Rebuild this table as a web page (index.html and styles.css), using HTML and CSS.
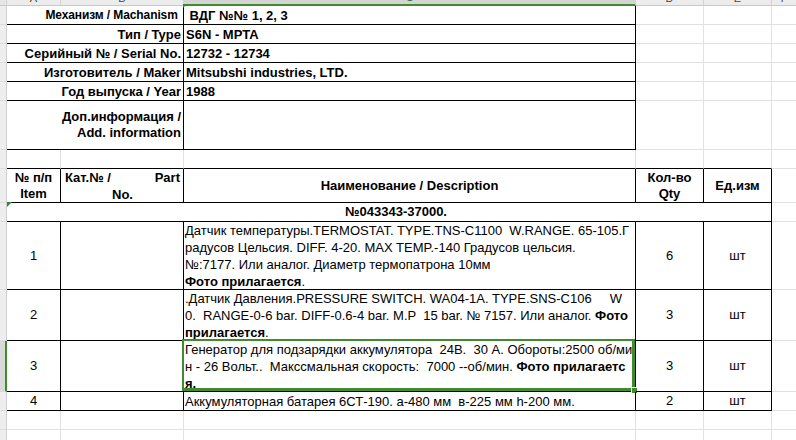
FILE: index.html
```html
<!DOCTYPE html>
<html lang="ru">
<head>
<meta charset="utf-8">
<title>Sheet</title>
<link rel="stylesheet" href="styles.css">
</head>
<body>
<div class="sheet">
  <!-- column header strip -->
  <div class="ch corner"></div>
  <div class="ch"><span>A</span></div>
  <div class="ch"><span>B</span></div>
  <div class="ch ch-sel"><span>C</span></div>
  <div class="ch"><span>D</span></div>
  <div class="ch"><span>E</span></div>
  <div class="ch ch-last"><span>F</span></div>

  <!-- header block -->
  <div class="rh"></div>
  <div class="c lbl span2 k"><span class="lbl-narrow">Механизм / Machanism&nbsp;</span></div>
  <div class="c val k flag"> ВДГ №№ 1, 2, 3</div>
  <div class="c"></div><div class="c"></div><div class="c last"></div>

  <div class="rh"></div>
  <div class="c lbl span2 k">Тип / Type</div>
  <div class="c val k">S6N - MPTA</div>
  <div class="c"></div><div class="c"></div><div class="c last"></div>

  <div class="rh"></div>
  <div class="c lbl span2 k">Серийный № / Serial No.</div>
  <div class="c val k">12732 - 12734</div>
  <div class="c"></div><div class="c"></div><div class="c last"></div>

  <div class="rh"></div>
  <div class="c lbl span2 k">Изготовитель / Maker</div>
  <div class="c val k">Mitsubshi industries, LTD.</div>
  <div class="c"></div><div class="c"></div><div class="c last"></div>

  <div class="rh"></div>
  <div class="c lbl span2 k">Год выпуска / Year</div>
  <div class="c val k">1988</div>
  <div class="c"></div><div class="c"></div><div class="c last"></div>

  <div class="rh"></div>
  <div class="c lbl span2 k"><div class="two">Доп.информация /<br>Add. information</div></div>
  <div class="c val k"></div>
  <div class="c"></div><div class="c"></div><div class="c last"></div>

  <!-- spacer row -->
  <div class="rh"></div>
  <div class="c kb"></div><div class="c kb"></div><div class="c kb"></div><div class="c kb"></div><div class="c kb"></div><div class="c last"></div>

  <!-- table header -->
  <div class="rh"></div>
  <div class="c k hd ctr">№ п/п<br>Item</div>
  <div class="c k hd dist"><div class="dist-l1"><span>Кат.№ /</span><span>Part</span></div><div class="dist-l2">No.</div></div>
  <div class="c k hd ctr">Наименование / Description</div>
  <div class="c k hd ctr">Кол-во<br>Qty</div>
  <div class="c k hd ctr">Ед.изм</div>
  <div class="c last"></div>

  <div class="rh"></div>
  <div class="c k hd ctr span5 flag flag-l sub">№043343-37000.</div>
  <div class="c last"></div>

  <!-- item 1 -->
  <div class="rh"></div>
  <div class="c k ctr">1</div>
  <div class="c k"></div>
  <div class="c k desc">
    <div class="ln">Датчик температуры.TERMOSTAT. TYPE.TNS-C1100  W.RANGE. 65-105.Г</div>
    <div class="ln">радусов Цельсия. DIFF. 4-20. MAX TEMP.-140 Градусов цельсия.</div>
    <div class="ln">№:7177. Или аналог. Диаметр термопатрона 10мм</div>
    <div class="ln"><b>Фото прилагается</b>.</div>
  </div>
  <div class="c k ctr">6</div>
  <div class="c k ctr">шт</div>
  <div class="c last"></div>

  <!-- item 2 -->
  <div class="rh"></div>
  <div class="c k ctr">2</div>
  <div class="c k"></div>
  <div class="c k desc">
    <div class="ln">.Датчик Давления.PRESSURE SWITCH. WA04-1A. TYPE.SNS-C106     W</div>
    <div class="ln">0.  RANGE-0-6 bar. DIFF-0.6-4 bar. M.P  15 bar. № 7157. Или аналог. <b>Фото</b></div>
    <div class="ln"><b>прилагается</b>.</div>
  </div>
  <div class="c k ctr">3</div>
  <div class="c k ctr">шт</div>
  <div class="c last"></div>

  <!-- item 3 (selected) -->
  <div class="rh rh-sel"></div>
  <div class="c k ctr">3</div>
  <div class="c k"></div>
  <div class="c k desc selected">
    <div class="ln">Генератор для подзарядки аккумулятора  24В.  30 А. Обороты:2500 об/ми</div>
    <div class="ln">н - 26 Вольт..  Максcмальная скорость:  7000 --об/мин. <b>Фото прилагаетс</b></div>
    <div class="ln"><b>я.</b></div>
    <div class="sel-box"></div>
    <div class="sel-handle"></div>
  </div>
  <div class="c k ctr">3</div>
  <div class="c k ctr">шт</div>
  <div class="c last"></div>

  <!-- item 4 -->
  <div class="rh"></div>
  <div class="c k ctr">4</div>
  <div class="c k"></div>
  <div class="c k desc">
    <div class="ln">Аккумуляторная батарея 6СТ-190. а-480 мм  в-225 мм h-200 мм.</div>
  </div>
  <div class="c k ctr">2</div>
  <div class="c k ctr">шт</div>
  <div class="c last"></div>

  <!-- empty rows -->
  <div class="rh"></div>
  <div class="c"></div><div class="c"></div><div class="c"></div><div class="c"></div><div class="c"></div><div class="c last"></div>
  <div class="rh"></div>
  <div class="c"></div><div class="c"></div><div class="c"></div><div class="c"></div><div class="c"></div><div class="c last"></div>
</div>
</body>
</html>
```

FILE: styles.css
```css
* { box-sizing: border-box; }

html, body {
  margin: 0;
  padding: 0;
  background: #ffffff;
  overflow: hidden;
}

body {
  width: 796px;
  height: 440px;
  font-family: "Liberation Sans", Arial, sans-serif;
  font-size: 13px;
  color: #000;
}

.sheet {
  display: grid;
  grid-template-columns: 7px 54px 123px 452px 68px 68px 1fr;
  grid-template-rows: 6px 19px 19px 19px 19px 19px 49px 19px 34px 19px 68px 51px 51px 19px 19px 19px;
  width: 796px;
}

/* column header strip */
.ch {
  background: #ececec;
  border-right: 1px solid #d2d2d2;
  border-bottom: 1px solid #c8c8c8;
  overflow: hidden;
  display: flex;
  align-items: flex-end;
  justify-content: center;
}
.ch span {
  font-family: "Liberation Sans", Arial, sans-serif;
  font-size: 11px;
  line-height: 14px;
  color: #444;
}
.ch.corner { background: #e6e6e6; }
.ch-sel {
  background: #d4d4d4;
  border-bottom: 2px solid #3e8c2c;
}
.ch-sel span { color: #1f6b3a; }
.ch-last { border-right: 0; }

/* row header strip */
.rh {
  background: #eeeeee;
  border-right: 1px solid #cfcfcf;
  border-bottom: 1px solid #dcdcdc;
}
.rh-sel {
  background: #d9d9d9;
  border-right: 2px solid #3e8c2c;
}

/* cells */
.c {
  border-right: 1px solid #e1e1e1;
  border-bottom: 1px solid #e1e1e1;
  position: relative;
  min-width: 0;
}
.c.last { border-right: 0; }
.k {
  border-right-color: #000;
  border-bottom-color: #000;
}
.kb { border-bottom-color: #000; }

.span2 { grid-column: span 2; }
.span5 { grid-column: span 5; }

.lbl {
  display: flex;
  align-items: center;
  justify-content: flex-end;
  padding-right: 2px;
  font-weight: bold;
  white-space: nowrap;
}
.lbl-narrow {
  font-size: 12px;
  letter-spacing: -0.1px;
}
.two {
  text-align: right;
  line-height: 16px;
}
.val {
  display: flex;
  align-items: center;
  padding-left: 2px;
  font-weight: bold;
  white-space: pre;
}

.hd { font-weight: bold; }
.ctr {
  display: flex;
  flex-direction: column;
  align-items: center;
  justify-content: center;
  text-align: center;
  line-height: 16px;
}
.sub { padding-left: 14px; }

.dist {
  display: flex;
  flex-direction: column;
  justify-content: center;
  padding: 0 3px 0 4px;
  line-height: 17px;
}
.dist-l1 {
  display: flex;
  justify-content: space-between;
}
.dist-l2 { text-align: center; }

.desc {
  display: flex;
  flex-direction: column;
  justify-content: center;
  padding-left: 1px;
  line-height: 17px;
  white-space: pre;
}
.ln { white-space: pre; }

/* error indicator triangles */
.flag::before {
  content: "";
  position: absolute;
  top: -2px;
  left: -1px;
  width: 0;
  height: 0;
  border-top: 4px solid #2f8a2f;
  border-right: 4px solid transparent;
}
.flag-l::before {
  top: -1px;
  left: 0;
  border-top-width: 5px;
  border-right-width: 5px;
}

/* selection */
.sel-box {
  position: absolute;
  top: -2px;
  left: -2px;
  right: 0;
  bottom: 0;
  border-style: solid;
  border-color: #3e8c2c;
  border-width: 2px 3px 3px 2px;
  pointer-events: none;
}
.sel-handle {
  position: absolute;
  right: -2px;
  bottom: -2px;
  width: 6px;
  height: 6px;
  background: #3e8c2c;
  border-left: 1px solid #fff;
  border-top: 1px solid #fff;
}
```
